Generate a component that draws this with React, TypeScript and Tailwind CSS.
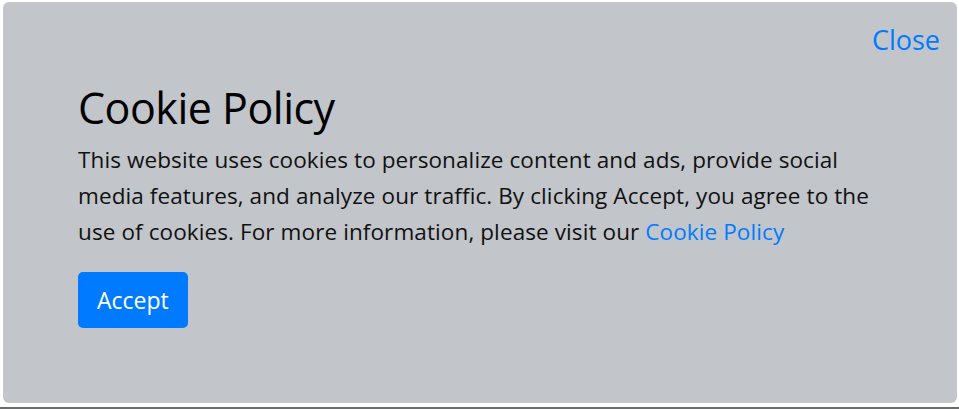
import React from "react";

const CookiePolicyPanel = () => {
  return (
    <div className="relative h-[409px] w-[959px] bg-white pl-[3px] pr-[2px] pt-[2px] pb-[4px] border-b-2 border-[#6c6c6c]">
      <div className="h-full rounded-[6px] bg-[#c2c5ca] pl-[75px] pr-[17px] pt-[20px]" style={{ fontFamily: '"Open Sans", "Noto Sans", sans-serif' }}>
        <div className="flex justify-end">
          <a href="#" className="text-[27px] leading-[36px] text-[#007bff]">Close</a>
        </div>
        <h1 className="mt-[24px] text-[43px] leading-[52px] font-medium text-black tracking-[-0.5px]">Cookie Policy</h1>
        <p className="mt-[8px] w-[805px] text-[22.5px] leading-[36px] text-[#111] tracking-[0.1px]">
          This website uses cookies to personalize content and ads, provide social media features, and analyze our traffic. By clicking Accept, you agree to the use of cookies. For more information, please visit our{" "}
          <a href="#" className="text-[#007bff]">Cookie Policy</a>
        </p>
        <button className="mt-[22px] h-[56px] rounded-[5px] bg-[#007bff] px-[19px] text-[23px] text-white">Accept</button>
      </div>
    </div>
  );
};

export default function App() {
  return <CookiePolicyPanel />;
}
